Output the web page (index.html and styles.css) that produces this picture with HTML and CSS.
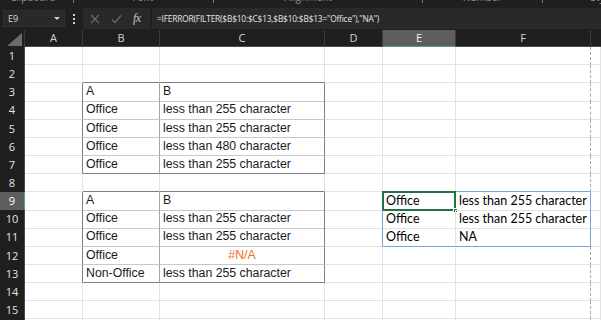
FILE: index.html
```html
<!DOCTYPE html>
<html>
<head>
<meta charset="utf-8">
<link rel="stylesheet" href="styles.css">
</head>
<body>
<div class="ribbon">
  <span class="grp g1">Clipboard</span><span class="mark m1"></span>
  <span class="grp g2">Font</span><span class="mark m2"></span>
  <span class="grp g3">Alignment</span><span class="mark m3"></span>
  <span class="grp g4">Number</span><span class="mark m4"></span>
  <span class="grp g5">Styles</span>
</div>
<div class="fbar">
  <div class="namebox"><span>E9</span>
    <svg width="6" height="4" viewBox="0 0 6 4"><path d="M0 0h6L3 3z" fill="#d0d0d0"/></svg>
  </div>
  <div class="dots">
    <svg width="3" height="12" viewBox="0 0 3 12"><rect x="0" y="1" width="2" height="2" fill="#d0d0d0"/><rect x="0" y="5" width="2" height="2" fill="#d0d0d0"/><rect x="0" y="9" width="2" height="2" fill="#d0d0d0"/></svg>
  </div>
  <div class="fxicons">
    <svg width="10" height="10" viewBox="0 0 10 10"><path d="M1 1L9 9M9 1L1 9" stroke="#6a6a6a" stroke-width="1.2"/></svg>
    <svg width="11" height="10" viewBox="0 0 11 10"><path d="M1 5.5L4 8.5L10 1.5" stroke="#6a6a6a" stroke-width="1.2" fill="none"/></svg>
    <span class="fx">fx</span>
  </div>
  <div class="finput">=IFERROR(FILTER($B$10:$C$13,$B$10:$B$13="Office"),"NA")</div>
</div>

<div class="sheet">
  <div class="row hdr">
    <div class="corner"><svg width="15" height="13" viewBox="0 0 15 13"><path d="M15 0V13H0z" fill="#6b6b6b"/></svg></div>
    <div class="ch">A</div><div class="ch">B</div><div class="ch">C</div><div class="ch">D</div><div class="ch sel">E</div><div class="ch">F</div><div class="ch last"></div>
  </div>

  <div class="row"><div class="rh">1</div><div class="c"></div><div class="c"></div><div class="c"></div><div class="c"></div><div class="c"></div><div class="c pb"></div><div class="c"></div></div>
  <div class="row"><div class="rh">2</div><div class="c"></div><div class="c ob"></div><div class="c ob"></div><div class="c"></div><div class="c"></div><div class="c pb"></div><div class="c"></div></div>

  <div class="row"><div class="rh">3</div><div class="c or"></div><div class="c t iv ib">A</div><div class="c t or ib">B</div><div class="c"></div><div class="c"></div><div class="c pb"></div><div class="c"></div></div>
  <div class="row"><div class="rh">4</div><div class="c or"></div><div class="c t iv ib">Office</div><div class="c t or ib">less than 255 character</div><div class="c"></div><div class="c"></div><div class="c pb"></div><div class="c"></div></div>
  <div class="row"><div class="rh">5</div><div class="c or"></div><div class="c t iv ib">Office</div><div class="c t or ib">less than 255 character</div><div class="c"></div><div class="c"></div><div class="c pb"></div><div class="c"></div></div>
  <div class="row"><div class="rh">6</div><div class="c or"></div><div class="c t iv ib">Office</div><div class="c t or ib">less than 480 character</div><div class="c"></div><div class="c"></div><div class="c pb"></div><div class="c"></div></div>
  <div class="row"><div class="rh">7</div><div class="c or"></div><div class="c t iv ob">Office</div><div class="c t or ob">less than 255 character</div><div class="c"></div><div class="c"></div><div class="c pb"></div><div class="c"></div></div>

  <div class="row"><div class="rh">8</div><div class="c"></div><div class="c ob"></div><div class="c ob"></div><div class="c"></div><div class="c bb"></div><div class="c pb bb"></div><div class="c"></div></div>

  <div class="row"><div class="rh sel">9</div><div class="c or"></div><div class="c t iv ib">A</div><div class="c t or ib">B</div><div class="c br"></div><div class="c s cur">Office<span class="selbox"><span class="handle"></span></span></div><div class="c s br">less than 255 character</div><div class="c"></div></div>
  <div class="row"><div class="rh">10</div><div class="c or"></div><div class="c t iv ib">Office</div><div class="c t or ib">less than 255 character</div><div class="c br"></div><div class="c s">Office</div><div class="c s br">less than 255 character</div><div class="c"></div></div>
  <div class="row"><div class="rh">11</div><div class="c or"></div><div class="c t iv ib">Office</div><div class="c t or ib">less than 255 character</div><div class="c br"></div><div class="c s bb">Office</div><div class="c s br bb">NA</div><div class="c"></div></div>
  <div class="row"><div class="rh">12</div><div class="c or"></div><div class="c t iv ib">Office</div><div class="c t or ib na">#N/A</div><div class="c"></div><div class="c"></div><div class="c pb"></div><div class="c"></div></div>
  <div class="row"><div class="rh">13</div><div class="c or"></div><div class="c t iv ob">Non-Office</div><div class="c t or ob">less than 255 character</div><div class="c"></div><div class="c"></div><div class="c pb"></div><div class="c"></div></div>

  <div class="row"><div class="rh">14</div><div class="c"></div><div class="c"></div><div class="c"></div><div class="c"></div><div class="c"></div><div class="c pb"></div><div class="c"></div></div>
  <div class="row"><div class="rh">15</div><div class="c"></div><div class="c"></div><div class="c"></div><div class="c"></div><div class="c"></div><div class="c pb"></div><div class="c"></div></div>
  <div class="row"><div class="rh">16</div><div class="c"></div><div class="c"></div><div class="c"></div><div class="c"></div><div class="c"></div><div class="c pb"></div><div class="c"></div></div>
</div>
</body>
</html>
```

FILE: styles.css
```css
* { box-sizing: border-box; }
html, body { margin: 0; padding: 0; }
body {
  width: 601px;
  height: 320px;
  overflow: hidden;
  background: #1f1f1f;
  font-family: "Liberation Sans", Arial, sans-serif;
}

/* ribbon remnant (group labels cut off at the top edge, as in the capture) */
.ribbon {
  height: 7px;
  overflow: hidden;
  display: flex;
  align-items: flex-end;
  background: #1f1f1f;
  color: #8c8c8c;
  font-family: "Open Sans", sans-serif;
  font-size: 10px;
  line-height: 10px;
  white-space: nowrap;
}
.grp { margin-bottom: 5px; }
.mark { width: 4px; height: 3px; border-right: 1px solid #7a7a7a; margin-bottom: 4px; align-self: flex-end; }
.g1 { margin-left: 10px; }
.m1 { margin-left: 18px; }
.g2 { margin-left: 58px; }
.m2 { margin-left: 60px; }
.g3 { margin-left: 70px; }
.m3 { margin-left: 90px; }
.g4 { margin-left: 40px; }
.m4 { margin-left: 40px; }
.g5 { margin-left: 48px; }

/* formula bar */
.fbar {
  height: 23px;
  display: flex;
  align-items: center;
  background: #1f1f1f;
  padding-left: 3px;
}
.namebox {
  width: 62px;
  height: 17px;
  background: #292929;
  border: 1px solid #303030;
  display: flex;
  align-items: center;
  justify-content: space-between;
  padding: 0 4px 0 4px;
  color: #d8d8d8;
  font-family: "Open Sans", sans-serif;
  font-size: 9px;
}
.namebox svg { margin-top: 1px; }
.dots {
  width: 18px;
  display: flex;
  justify-content: center;
  align-items: center;
}
.fxicons {
  width: 67px;
  height: 21px;
  background: #292929;
  display: flex;
  align-items: center;
  gap: 11px;
  padding-left: 7px;
}
.fx {
  font-family: "Liberation Serif", serif;
  font-style: italic;
  font-size: 12px;
  color: #c8c8c8;
  letter-spacing: -0.5px;
}
.finput {
  flex: 1;
  height: 21px;
  margin-left: 2px;
  background: #292929;
  color: #e4e4e4;
  font-family: "Open Sans", sans-serif;
  font-size: 8.4px;
  letter-spacing: -0.2px;
  line-height: 21px;
  padding-left: 5px;
  white-space: nowrap;
}

/* sheet */
.sheet { background: #ffffff; height: 290px; overflow: hidden; }
.row {
  display: grid;
  grid-template-columns: 25px 58px 77px 165px 58px 73px 135px 10px;
  height: 18.15px;
}
.row.hdr { height: 17px; background: #1f1f1f; }
.corner {
  display: flex;
  align-items: flex-end;
  justify-content: flex-end;
  padding: 0 2px 1px 0;
  border-right: 1px solid #3a3a3a;
}
.ch {
  color: #d4d4d4;
  font-family: "Open Sans", sans-serif;
  font-size: 11px;
  line-height: 16px;
  text-align: center;
  border-right: 1px solid #3c3c3c;
  border-bottom: 1px solid #4a4a4a;
}
.ch.sel { background: #5e5e5e; border-bottom: 1px solid #5ba07a; color: #f0f0f0; }
.ch.last { border-right: none; }
.rh {
  background: #1f1f1f;
  color: #e4e4e4;
  font-family: "Open Sans", sans-serif;
  font-size: 11px;
  line-height: 18px;
  text-align: center;
  border-right: 1px solid #4a4a4a;
}
.rh.sel { background: #5e5e5e; border-right: 1px solid #5ba07a; color: #ffffff; }

.c {
  position: relative;
  border-right: 1px solid #e2e2e2;
  border-bottom: 1px solid #e2e2e2;
  color: #1a1a1a;
  font-size: 12.3px;
  line-height: 17.5px;
  padding-left: 3px;
  white-space: nowrap;
}
.c.t { font-family: "Liberation Sans", Arial, sans-serif; }
.c.iv { border-right-color: #a6a6a6; }
.c.ib { border-bottom-color: #c8c8c8; }
.c.or { border-right-color: #7f7f7f; }
.c.ob { border-bottom-color: #7f7f7f; }
.c.pb { border-right: 1px dashed #a8a8a8; }
.c.na { color: #f0701e; text-align: center; padding-left: 0; }

.c.s {
  font-family: Lato, "Liberation Sans", sans-serif;
  font-size: 12.5px;
  color: #000000;
  line-height: 18px;
}
.c.br { border-right: 1px solid #7da1dd; }
.c.bb { border-bottom: 1px solid #7da1dd; }

.selbox {
  position: absolute;
  left: -1px;
  top: -1px;
  right: -1px;
  bottom: -1px;
  border: 2px solid #217346;
}
.handle {
  position: absolute;
  right: -4px;
  bottom: -4px;
  width: 5px;
  height: 5px;
  background: #217346;
  border: 1px solid #ffffff;
}
```
